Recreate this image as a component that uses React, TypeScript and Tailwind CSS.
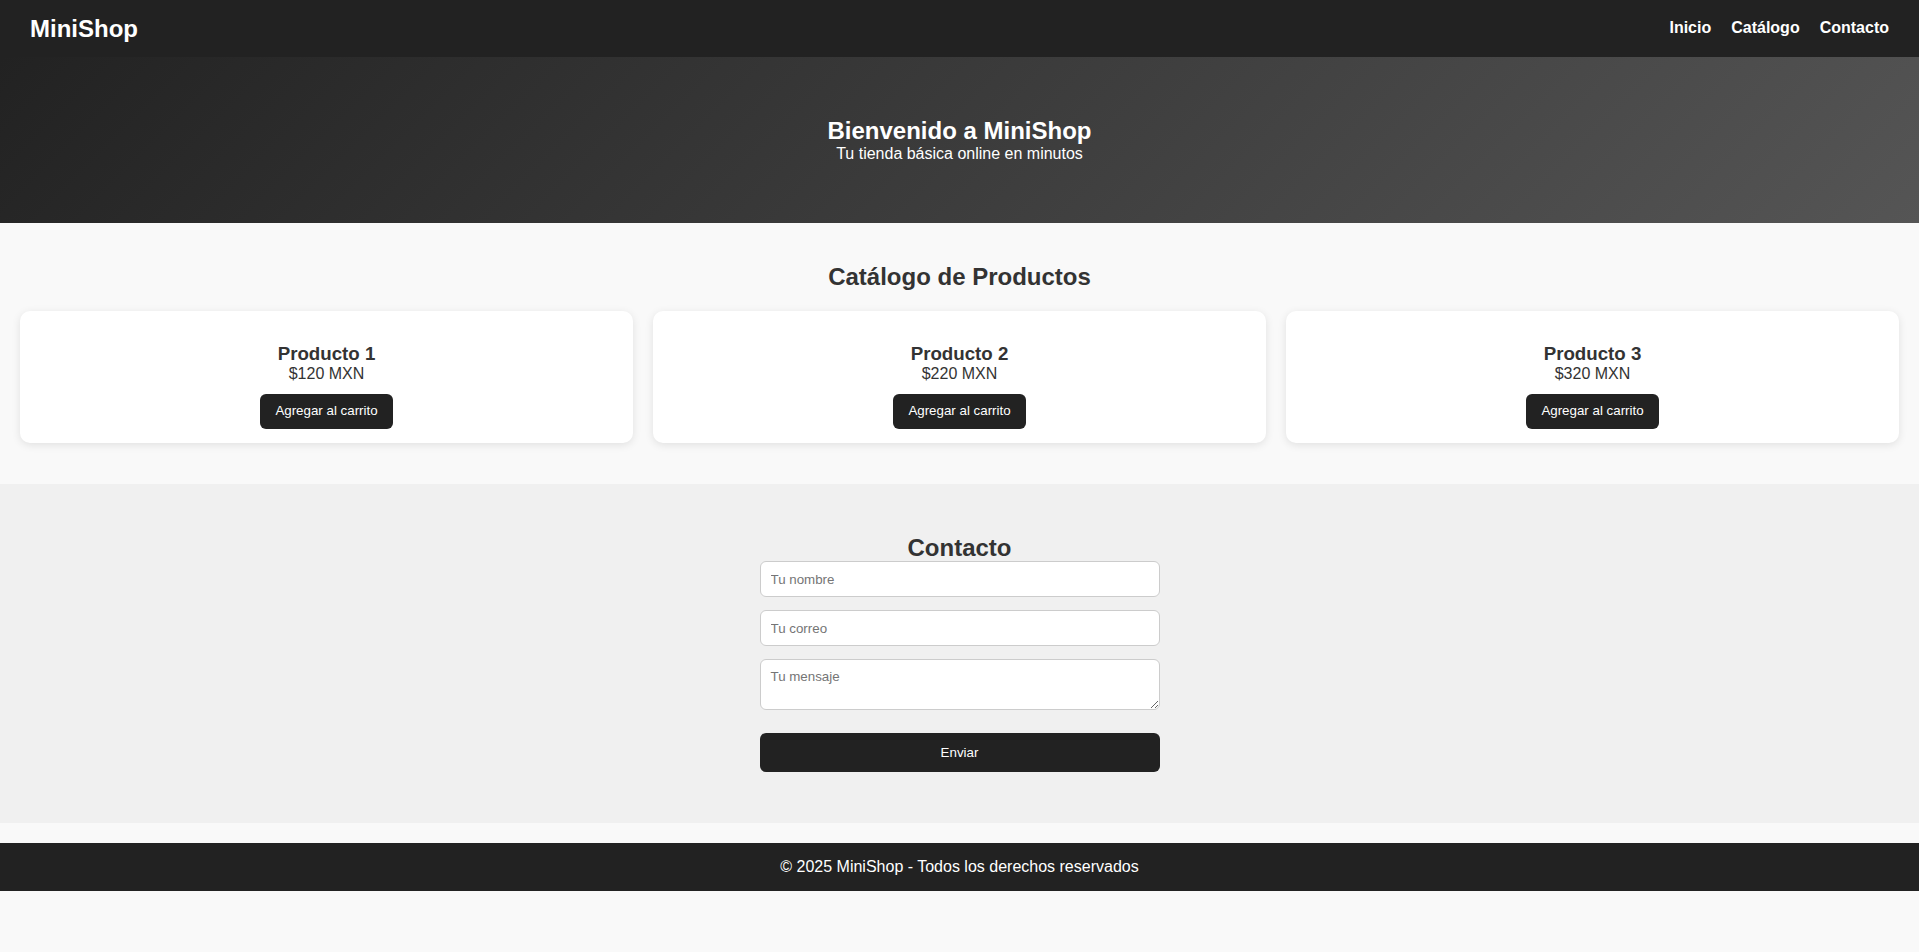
import React from "react";

const products = [
  { name: "Producto 1", price: "$120 MXN" },
  { name: "Producto 2", price: "$220 MXN" },
  { name: "Producto 3", price: "$320 MXN" },
];

export default function App() {
  return (
    <div
      className="min-h-screen bg-[#f9f9f9] text-[#333]"
      style={{ fontFamily: '"Liberation Sans", Arial, sans-serif' }}
    >
      <header className="h-[57px] bg-[#222] px-[30px] flex items-center justify-between text-white">
        <h1 className="m-0 text-[24px] leading-[27.6px] font-bold">MiniShop</h1>
        <nav className="flex gap-[20px] text-[16px] leading-[18.4px] font-bold">
          <a href="#" className="text-white no-underline">Inicio</a>
          <a href="#" className="text-white no-underline">Catálogo</a>
          <a href="#" className="text-white no-underline">Contacto</a>
        </nav>
      </header>

      <section className="py-[60px] text-center text-white bg-[linear-gradient(135deg,#222,#555)]">
        <h2 className="m-0 text-[24px] leading-[27.6px] font-bold">Bienvenido a MiniShop</h2>
        <p className="m-0 text-[16px] leading-[18.4px]">Tu tienda básica online en minutos</p>
      </section>

      <section className="bg-[#f9f9f9] pt-[40px] pb-[41px] px-[20px]">
        <h2 className="m-0 mb-[20px] text-center text-[24px] leading-[27.6px] font-bold text-[#333]">
          Catálogo de Productos
        </h2>
        <div className="grid grid-cols-3 gap-[20px]">
          {products.map((p) => (
            <div
              key={p.name}
              className="bg-white rounded-[10px] shadow-[0_2px_8px_rgba(0,0,0,0.1)] pt-[32px] pb-[14px] flex flex-col items-center text-center"
            >
              <h3 className="m-0 text-[18.72px] leading-[21.5px] font-bold text-[#333]">{p.name}</h3>
              <p className="m-0 mt-[1px] text-[16px] leading-[18.4px] text-[#333]">{p.price}</p>
              <button className="mt-[10px] h-[35px] px-[15px] bg-[#222] text-white text-[13.33px] leading-[15.3px] rounded-[6px] border-0 cursor-pointer">
                Agregar al carrito
              </button>
            </div>
          ))}
        </div>
      </section>

      <section className="bg-[#f0f0f0] pt-[50px] pb-[51px]">
        <h2 className="m-0 text-center text-[24px] leading-[27.6px] font-bold text-[#333]">Contacto</h2>
        <form className="w-[400px] mx-auto flex flex-col" onSubmit={(e) => e.preventDefault()}>
          <input
            type="text"
            placeholder="Tu nombre"
            className="h-[36px] px-[10px] border border-[#ccc] rounded-[6px] bg-white text-[13.33px] placeholder:text-[#757575] outline-none"
          />
          <input
            type="email"
            placeholder="Tu correo"
            className="mt-[13px] h-[36px] px-[10px] border border-[#ccc] rounded-[6px] bg-white text-[13.33px] placeholder:text-[#757575] outline-none"
          />
          <textarea
            placeholder="Tu mensaje"
            className="mt-[13px] h-[51px] px-[10px] py-[9px] border border-[#ccc] rounded-[6px] bg-white text-[13.33px] leading-[15.3px] placeholder:text-[#757575] outline-none"
          />
          <button
            type="submit"
            className="mt-[23px] h-[39px] bg-[#222] text-white text-[13.33px] rounded-[6px] border-0 cursor-pointer"
          >
            Enviar
          </button>
        </form>
      </section>

      <footer className="mt-[20px] h-[48px] bg-[#222] text-white flex items-center justify-center text-[16px] leading-[18.4px]">
        © 2025 MiniShop - Todos los derechos reservados
      </footer>
    </div>
  );
}
